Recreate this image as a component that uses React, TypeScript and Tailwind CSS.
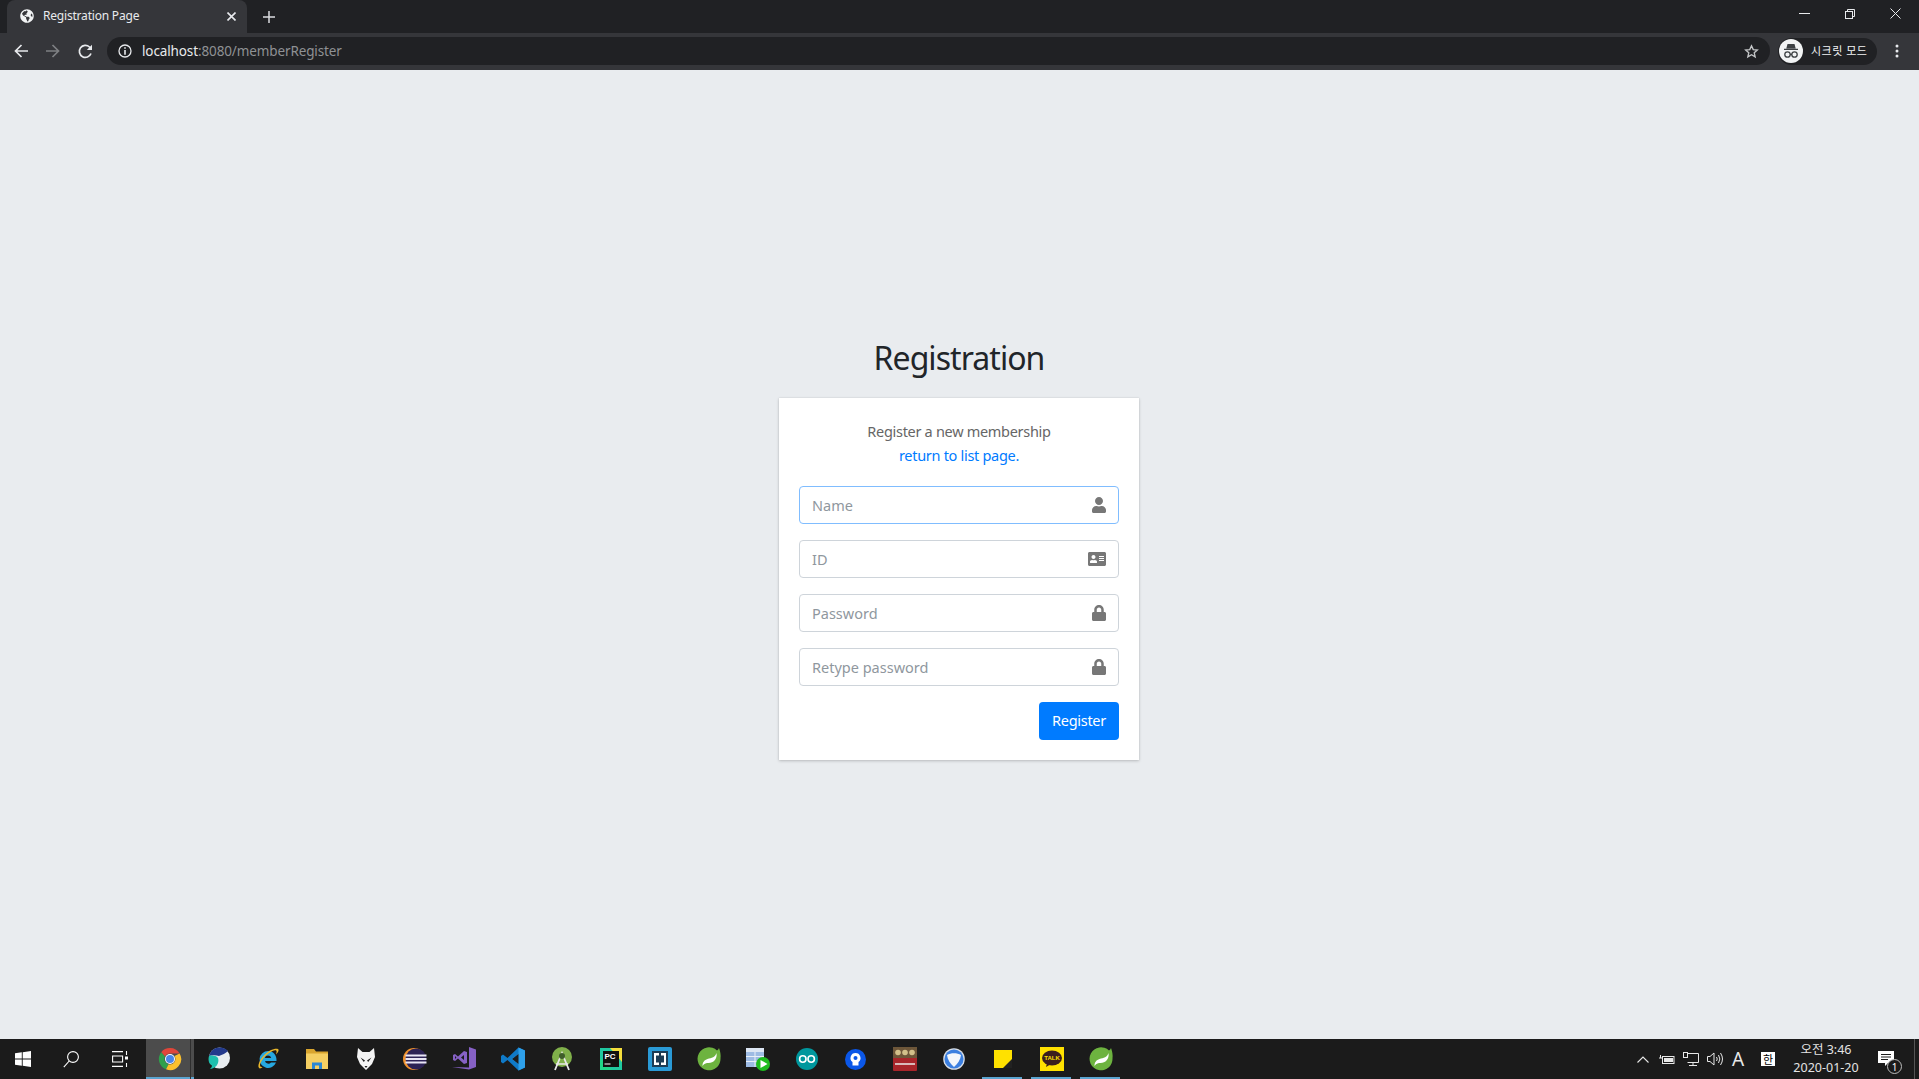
import React from "react";
import { FaUser, FaAddressCard, FaLock, FaGlobeAmericas } from "react-icons/fa";

const UI = "font-['Noto_Sans','Noto_Sans_CJK_KR',sans-serif]";

function Field({ placeholder, icon, focus }: { placeholder: string; icon: React.ReactNode; focus?: boolean }) {
  return (
    <div className={`flex h-[38px] items-center rounded-[4px] border bg-white ${focus ? "border-[#80bdff]" : "border-[#ced4da]"}`}>
      <input
        readOnly
        placeholder={placeholder}
        className="h-full min-w-0 flex-1 bg-transparent pl-3 text-[14.5px] outline-none placeholder:text-[#8f979e]"
      />
      <span className="flex w-[38px] justify-center text-[#777777]">{icon}</span>
    </div>
  );
}

const Slot = ({ children, w = "w-[49px]", cls = "" }: { children?: React.ReactNode; w?: string; cls?: string }) => (
  <div className={`relative flex h-full shrink-0 items-center justify-center ${w} ${cls}`}>{children}</div>
);
const Under = ({ cls = "" }: { cls?: string }) => <span className={`absolute bottom-0 h-[2px] bg-[#5ba4d0] ${cls}`} />;

const Chrome = () => (
  <svg width="24" height="24" viewBox="0 0 24 24">
    <path d="M12 1a11 11 0 0 1 9.6 5.5H12a5.5 5.5 0 0 0-5 3L3.2 5.2A11 11 0 0 1 12 1z" fill="#e0463a" />
    <path d="M3.2 5.2 7 9.5a5.5 5.5 0 0 0 3.600 7.800L8 22.300A11 11 0 0 1 3.200 5.200z" fill="#2fa04c" />
    <path d="M21.600 6.500A11 11 0 0 1 8 22.300l2.600-5A5.500 5.500 0 0 0 16.500 9z" fill="#fbc02d" />
    <circle cx="12" cy="12" r="5" fill="#fff" />
    <circle cx="12" cy="12" r="4" fill="#4a86e8" />
  </svg>
);
const Whale = () => (
  <svg width="24" height="24" viewBox="0 0 24 24">
    <circle cx="12.500" cy="11" r="10.500" fill="#e8edf0" />
    <path d="M12.500.5A10.500 10.500 0 0 0 2 9c3-1 7-1 10 0 3-1 7-3 9-5A10.500 10.500 0 0 0 12.500.500z" fill="#233a8c" />
    <path d="M2 9c3-1 7-.5 9 2 1 3 0 7-3 9-1 .8-3 2-5 2 1-1 2-2 2-3.500C2 17 .800 13 2 9z" fill="#1ebfae" />
  </svg>
);
const IE = () => (
  <svg width="24" height="24" viewBox="0 0 24 24">
    <path d="M12 4a8.500 8.500 0 1 0 8 11.500h-5a3.500 3.500 0 0 1-6-1.500h11.500c.5-6-3.500-10-8.500-10zM8.800 11a3.300 3.300 0 0 1 6.400 0z" fill="#27a8e0" />
    <path d="M3 21C.5 18 6 8 14 3.500 18 1.500 22 1 22.500 2.500c.5 1.500-1 3.500-2.500 5 .5-2 1-3.500.2-4C18 2 8 8 4.500 16c-1 2.500-.5 4.500 2 4-1.500 1.500-2.700 1.800-3.500 1z" fill="#e8b62c" />
  </svg>
);
const Folder = () => (
  <svg width="22" height="20" viewBox="0 0 22 20">
    <path d="M0 0h8l2 2.500h12V6H0z" fill="#d9a52e" />
    <path d="M0 4.500h22V20H0z" fill="#f5cf62" />
    <path d="M6 20v-6.500h10V20h-3v-3.500H9V20z" fill="#2b87d3" />
  </svg>
);
const Fox = () => (
  <svg width="18" height="24" viewBox="0 0 18 24">
    <path d="M1 1l4.500 4h7L17 1l1 9-3 7-6 6-6-6-3-7z" fill="#f4f4f4" />
    <path d="M3.500 10.500 8 13.500 6.800 15zM14.500 10.500 10 13.500l1.200 1.500zM7.500 19h3L9 21z" fill="#1c1c1c" />
  </svg>
);
const Eclipse = () => (
  <svg width="24" height="22" viewBox="0 0 24 22">
    <circle cx="11" cy="11" r="11" fill="#f0922e" />
    <circle cx="13" cy="11" r="10.500" fill="#2c2255" />
    <rect x="2.500" y="6.500" width="21" height="2" fill="#e9e6f5" />
    <rect x="2.500" y="10" width="21" height="2" fill="#e9e6f5" />
    <rect x="2.500" y="13.500" width="21" height="2" fill="#e9e6f5" />
  </svg>
);
const VS = () => (
  <svg width="24" height="24" viewBox="0 0 24 24">
    <path d="M17 0l7 2.500v17.500l-7 2.500L0 20l17 .5z" fill="#8661c5" />
    <path d="M1 8l2-1 3 2.500L12 4l3 1v11l-3 1-6-5.500L3 14l-2-1zM12 8l-3 2.500 3 2.500zM3 9v3l1.500-1.500z" fill="#8661c5" />
  </svg>
);
const VSCode = () => (
  <svg width="24" height="24" viewBox="0 0 24 24">
    <path d="M17.500.500 24 3.500v17l-6.500 3-11-10.500-4.500 3.500L0 15V9l2-1.500L6.500 11z" fill="#0f7ac8" />
    <path d="M17.500.500 24 3.500v17l-6.500 3V17l-7-5 7-5z" fill="#2ea0ea" />
    <path d="M17.500 7 11 12l6.500 5z" fill="#1c1c1c" />
  </svg>
);
const AndroidStudio = () => (
  <svg width="22" height="24" viewBox="0 0 22 24">
    <circle cx="11" cy="10" r="10" fill="#80b04a" />
    <path d="M4 23 11 6l7 17" fill="none" stroke="#e8e8e8" strokeWidth="1.800" />
    <circle cx="11" cy="9" r="3" fill="#3f5e2a" />
    <path d="M5 17h12" stroke="#e8e8e8" strokeWidth="1.500" />
  </svg>
);
const PyCharm = () => (
  <svg width="22" height="22" viewBox="0 0 22 22">
    <rect width="22" height="22" fill="#20c8a0" />
    <path d="M10 0h12v14z" fill="#f5de3c" />
    <path d="M0 10 0 22h12z" fill="#21d789" />
    <rect x="3" y="3" width="16" height="16" fill="#111" />
    <text x="4.500" y="11" fontSize="8" fontWeight="700" fill="#fff" fontFamily="Liberation Sans">PC</text>
    <rect x="4.500" y="15.500" width="6" height="1" fill="#fff" />
  </svg>
);
const Brackets = () => (
  <svg width="24" height="24" viewBox="0 0 24 24">
    <rect width="24" height="24" rx="2" fill="#2a9ad6" />
    <path d="M4 4h16v16H4z" fill="#1d3c55" />
    <path d="M6 6h5v12H6zM13 6h5v12h-5z" fill="#fff" />
    <path d="M8 8.500h3v7H8zM13 8.500h3v7h-3z" fill="#1d3c55" />
  </svg>
);
const Spring = () => (
  <svg width="24" height="24" viewBox="0 0 24 24">
    <path d="M22 1c1 3 2 6 1.500 10A11.500 11.500 0 1 1 20 3.500 5 5 0 0 0 22 1z" fill="#6db33f" />
    <path d="M19.500 6c-1 4-5 5-9 6-3 1-5 3-5 7 2-3 4-3 6-3 5 0 9-4 8-10z" fill="#fff" />
  </svg>
);
const TablePlay = () => (
  <svg width="24" height="24" viewBox="0 0 24 24">
    <rect x="0" y="1" width="18" height="19" fill="#9dbbe3" />
    <path d="M0 1h18v4H0z" fill="#dce6f3" />
    <path d="M0 9.500h18M0 14.500h18M9 5v15" stroke="#e8eff8" strokeWidth="1" />
    <circle cx="17" cy="17" r="7" fill="#1ebc1e" />
    <path d="M14.500 13l7 4-7 4z" fill="#fff" />
  </svg>
);
const Arduino = () => (
  <svg width="22" height="22" viewBox="0 0 22 22">
    <circle cx="11" cy="11" r="11" fill="#00979d" />
    <circle cx="6.800" cy="11" r="3.200" fill="none" stroke="#fff" strokeWidth="1.600" />
    <circle cx="15.200" cy="11" r="3.200" fill="none" stroke="#fff" strokeWidth="1.600" />
  </svg>
);
const BluePin = () => (
  <svg width="21" height="21" viewBox="0 0 21 21">
    <circle cx="10.500" cy="10.500" r="10.500" fill="#0b57e8" />
    <path d="M10.500 4a5 5 0 0 1 3 9v3.500h-6V13a5 5 0 0 1 3-9z" fill="#fff" />
    <circle cx="10.500" cy="9" r="2" fill="#0b57e8" />
  </svg>
);
const Pedal = () => (
  <svg width="24" height="24" viewBox="0 0 24 24">
    <rect width="24" height="24" rx="1" fill="#a8252a" />
    <rect width="24" height="11" fill="#6d5639" />
    <circle cx="5" cy="5.500" r="2.800" fill="#d2c08a" />
    <circle cx="12" cy="5.500" r="2.800" fill="#d2c08a" />
    <circle cx="19" cy="5.500" r="2.800" fill="#d2c08a" />
    <rect x="2" y="16" width="20" height="2" fill="#d9b9b9" />
  </svg>
);
const Pick = () => (
  <svg width="22" height="22" viewBox="0 0 22 22">
    <circle cx="11" cy="11" r="10.800" fill="#d8dee6" />
    <circle cx="11" cy="11" r="9.500" fill="#3b7fe0" />
    <path d="M4 7c4-2.500 10-2.500 14 0-.5 5-3.500 9-7 12-3.500-3-6.500-7-7-12z" fill="#f2f6fb" />
  </svg>
);
const Sticky = () => (
  <svg width="18" height="18" viewBox="0 0 18 18">
    <path d="M0 0h18v18H0z" fill="#ffe100" />
    <path d="M18 9v9H9z" fill="#222" />
  </svg>
);
const Talk = () => (
  <svg width="24" height="24" viewBox="0 0 24 24">
    <rect width="24" height="24" fill="#ffe100" />
    <ellipse cx="12" cy="11" rx="10" ry="7.500" fill="#3b1e1e" />
    <path d="M7 16l-1 4 5-3z" fill="#3b1e1e" />
    <text x="12" y="13" textAnchor="middle" fontSize="6" fontWeight="700" fill="#ffe100" fontFamily="Liberation Sans">TALK</text>
  </svg>
);

export default function App() {
  return (
    <div className={`flex h-[1079px] w-full flex-col overflow-hidden bg-[#e9ecef] ${UI}`}>
      {/* tab strip */}
      <div className="flex h-[33px] items-end bg-[#202124] pl-[7px] text-white">
        <div className="flex h-[33px] w-[240px] items-center rounded-t-[8px] bg-[#35363a] pb-[1px] pl-[13px] pr-[11px]">
          <FaGlobeAmericas size={14} className="shrink-0 text-[#f1f3f4]" />
          <span className="ml-[9px] flex-1 text-[12px] tracking-[-0.2px] text-[#e8eaed]">Registration Page</span>
          <svg width="9" height="9" viewBox="0 0 9 9" stroke="#e8eaed" strokeWidth="1.600"><path d="M.5.5l8 8M8.500.5l-8 8" /></svg>
        </div>
        <div className="ml-[16px] flex h-[32px] items-center">
          <svg width="12" height="12" viewBox="0 0 12 12" stroke="#dadce0" strokeWidth="1.500"><path d="M6 0v12M0 6h12" /></svg>
        </div>
        <div className="ml-auto flex h-[27px] self-start">
          <div className="flex w-[46px] items-center justify-center">
            <svg width="11" height="1" viewBox="0 0 11 1"><rect width="11" height="1" fill="#e8eaed" /></svg>
          </div>
          <div className="flex w-[46px] items-center justify-center">
            <svg width="10" height="10" viewBox="0 0 10 10" fill="none" stroke="#e8eaed"><rect x=".5" y="2.500" width="7" height="7" /><path d="M2.500 2.500v-2h7v7h-2" /></svg>
          </div>
          <div className="flex w-[46px] items-center justify-center pr-[1px]">
            <svg width="11" height="11" viewBox="0 0 11 11" stroke="#e8eaed"><path d="M.5.500l10 10M10.500.500l-10 10" /></svg>
          </div>
        </div>
      </div>
      {/* toolbar */}
      <div className="flex h-[37px] shrink-0 items-center bg-[#35363a] pb-[1px]">
        <div className="flex w-[14px]" />
        <svg width="14" height="14" viewBox="0 0 14 14" fill="none" stroke="#e8eaed" strokeWidth="1.700"><path d="M14 7H1.500M7.500 1l-6 6 6 6" /></svg>
        <svg className="ml-[18px]" width="14" height="14" viewBox="0 0 14 14" fill="none" stroke="#7e8083" strokeWidth="1.700"><path d="M0 7h12.500M6.500 1l6 6-6 6" /></svg>
        <svg className="ml-[18px]" width="15" height="15" viewBox="0 0 15 15" fill="none" stroke="#e8eaed" strokeWidth="1.700"><path d="M13 9.500A6 6 0 1 1 11.500 3L13.500 5" /><path d="M14 .8V6H8.800z" fill="#e8eaed" stroke="none" /></svg>
        <div className="ml-[14px] flex h-[28px] w-[1663px] items-center rounded-full bg-[#202124] pl-[11px] pr-[11px]">
          <svg width="14" height="14" viewBox="0 0 14 14" fill="none"><circle cx="7" cy="7" r="6" stroke="#e8eaed" strokeWidth="1.300" /><path d="M6.200 3.300h1.600v1.500H6.200zM6.200 6h1.600v4.700H6.200z" fill="#e8eaed" /></svg>
          <span className="ml-[10px] text-[13.5px] tracking-[-0.12px] text-[#e8eaed]">localhost<span className="text-[#8f9194]">:8080/memberRegister</span></span>
          <svg className="ml-auto" width="15" height="15" viewBox="0 0 24 24" fill="none" stroke="#c4c6c8" strokeWidth="2.200"><path d="M12 3l2.800 6 6.500.7-4.900 4.400 1.400 6.400L12 17.200 6.200 20.500l1.400-6.400L2.700 9.700 9.200 9z" /></svg>
        </div>
        <div className="ml-[8px] flex h-[27px] w-[99px] items-center rounded-full bg-[#202124] pl-[1px]">
          <svg width="24" height="24" viewBox="0 0 24 24">
            <circle cx="12" cy="12" r="12" fill="#f1f3f4" />
            <path d="M8.500 5h7l1.200 4.500H7.300zM5 9.700h14v1.300H5z" fill="#3c4043" />
            <g fill="none" stroke="#3c4043" strokeWidth="1.300"><circle cx="8.500" cy="15.500" r="2.700" /><circle cx="15.500" cy="15.500" r="2.700" /><path d="M11 15.300h2" /></g>
          </svg>
          <span className="ml-[8px] whitespace-nowrap text-[11px] tracking-[0.5px] text-[#f1f3f4]">시크릿 모드</span>
        </div>
        <svg className="ml-[18px]" width="4" height="14" viewBox="0 0 4 14" fill="#e8eaed"><circle cx="2" cy="2" r="1.500" /><circle cx="2" cy="7" r="1.500" /><circle cx="2" cy="12" r="1.500" /></svg>
      </div>

      {/* page */}
      <main className="flex flex-1 flex-col items-center justify-center pb-[11px] pr-[1px]">
        <h1 className="mb-[20px] text-[32px] leading-[40px] tracking-[-0.95px] text-[#212529]">Registration</h1>
        <div className="w-[360px] bg-white px-5 pb-5 pt-[21px] shadow-[0_0_1px_rgba(0,0,0,0.125),0_1px_3px_rgba(0,0,0,0.2)]">
          <p className="text-center text-[14.5px] leading-[24px] tracking-[-0.3px] text-[#666666]">Register a new membership</p>
          <p className="mb-[19px] text-center text-[14.5px] leading-[24px] tracking-[-0.3px] text-[#007bff]">return to list page.</p>
          <div className="flex flex-col gap-4">
            <Field placeholder="Name" focus icon={<FaUser size={16} />} />
            <Field placeholder="ID" icon={<FaAddressCard size={18} className="mr-[4px]" />} />
            <Field placeholder="Password" icon={<FaLock size={16} />} />
            <Field placeholder="Retype password" icon={<FaLock size={16} />} />
          </div>
          <div className="mt-4 flex justify-end">
            <button className="h-[38px] w-[80px] rounded-[4px] bg-[#007bff] text-[14.5px] tracking-[-0.3px] text-white">Register</button>
          </div>
        </div>
      </main>

      {/* taskbar */}
      <div className="flex h-[40px] shrink-0 items-center bg-[#1b1b1b] text-white">
        <Slot w="w-[46px]">
          <svg width="16" height="16" viewBox="0 0 16 16" fill="#fff"><path d="M0 2.300 6.800 1.300v6.200H0zM7.700 1.200 16 0v7.500H7.700zM0 8.400h6.800v6.300L0 13.700zM7.700 8.400H16V16l-8.300-1.200z" /></svg>
        </Slot>
        <Slot w="w-[50px]">
          <svg width="16" height="17" viewBox="0 0 16 17" fill="none" stroke="#fff" strokeWidth="1.100"><circle cx="10" cy="6" r="5.400" /><path d="M6.200 10 .8 16.200" /></svg>
        </Slot>
        <Slot w="w-[50px]" cls="pr-[2px]">
          <svg width="16" height="16" viewBox="0 0 16 16" fill="none" stroke="#fff" strokeWidth="1.100"><path d="M0 .6h11M0 15.400h11M.6 5h10v6H.600zM14.500 0v4M14.500 12v4" /><rect x="13" y="5.500" width="3" height="3" fill="#fff" stroke="none" /></svg>
        </Slot>
        <Slot w="w-[48px]" cls="bg-[#4c4c4c]"><Chrome /><Under cls="left-0 right-0" /><span className="absolute bottom-0 right-[3px] top-0 w-[1px] bg-[#2e2e2e]" /></Slot>
        <Slot><Whale /></Slot>
        <Slot><IE /></Slot>
        <Slot><Folder /></Slot>
        <Slot><Fox /></Slot>
        <Slot><Eclipse /></Slot>
        <Slot><VS /></Slot>
        <Slot><VSCode /></Slot>
        <Slot><AndroidStudio /></Slot>
        <Slot><PyCharm /></Slot>
        <Slot><Brackets /></Slot>
        <Slot><Spring /></Slot>
        <Slot><TablePlay /></Slot>
        <Slot><Arduino /></Slot>
        <Slot><BluePin /></Slot>
        <Slot><Pedal /></Slot>
        <Slot><Pick /></Slot>
        <Slot><Sticky /><Under cls="left-[4px] right-[5px]" /></Slot>
        <Slot><Talk /><Under cls="left-[4px] right-[5px]" /></Slot>
        <Slot><Spring /><Under cls="left-[4px] right-[5px]" /></Slot>

        <div className="ml-auto flex h-full items-center">
          <svg width="12" height="7" viewBox="0 0 12 7" fill="none" stroke="#e8e8e8" strokeWidth="1.100"><path d="M.5 6.500 6 1l5.500 5.500" /></svg>
          <svg className="ml-[10px]" width="16" height="11" viewBox="0 0 16 11" fill="none" stroke="#e8e8e8"><rect x="3.500" y="2.500" width="11.500" height="7" /><rect x="5" y="4" width="9" height="4" fill="#e8e8e8" stroke="none" /><path d="M0 4h3M1.500 1v3" /></svg>
          <svg className="ml-[8px]" width="16" height="15" viewBox="0 0 16 15" fill="none" stroke="#e8e8e8"><path d="M4.500 1.500H15.500V10.500H4.500M10 10.500v3M6 13.500h8" /><rect x=".5" y=".5" width="4" height="5" /></svg>
          <svg className="ml-[8px]" width="16" height="14" viewBox="0 0 16 14" fill="none" stroke="#e8e8e8"><path d="M.5 4.500h2.500L7 1v12L3 9.500H.5zM9.500 5q1.500 2 0 4M11.500 3q2.700 4 0 8M13.500 1q4 6 0 12" /></svg>
          <span className="ml-[8px] w-[14px] text-center text-[19px] leading-none text-[#e8e8e8]">A</span>
          <span className="ml-[16px] flex h-[14px] w-[14px] items-center justify-center bg-white text-[11px] leading-none text-black">한</span>
          <div className="ml-[5px] w-[92px] text-center text-[12.5px] leading-[18px] text-[#e4e4e4]">
            <div>오전 3:46</div>
            <div>2020-01-20</div>
          </div>
          <div className="relative ml-[6px] mr-[20px] h-[16px] w-[16px]">
            <svg width="16" height="16" viewBox="0 0 16 16" fill="#fff"><path d="M0 0h16v12h-6l-3 3v-3H0z" /><path d="M3 3.500h10M3 6h10M3 8.500h7" stroke="#1b1b1b" /></svg>
            <span className="absolute -bottom-[7px] -right-[8px] flex h-[15px] w-[15px] items-center justify-center rounded-full border border-[#bdbdbd] bg-[#1b1b1b] text-[10px] leading-none text-white">1</span>
          </div>
          <span className="h-full w-[1px] bg-[#555]" />
          <span className="w-[4px]" />
        </div>
      </div>
    </div>
  );
}
